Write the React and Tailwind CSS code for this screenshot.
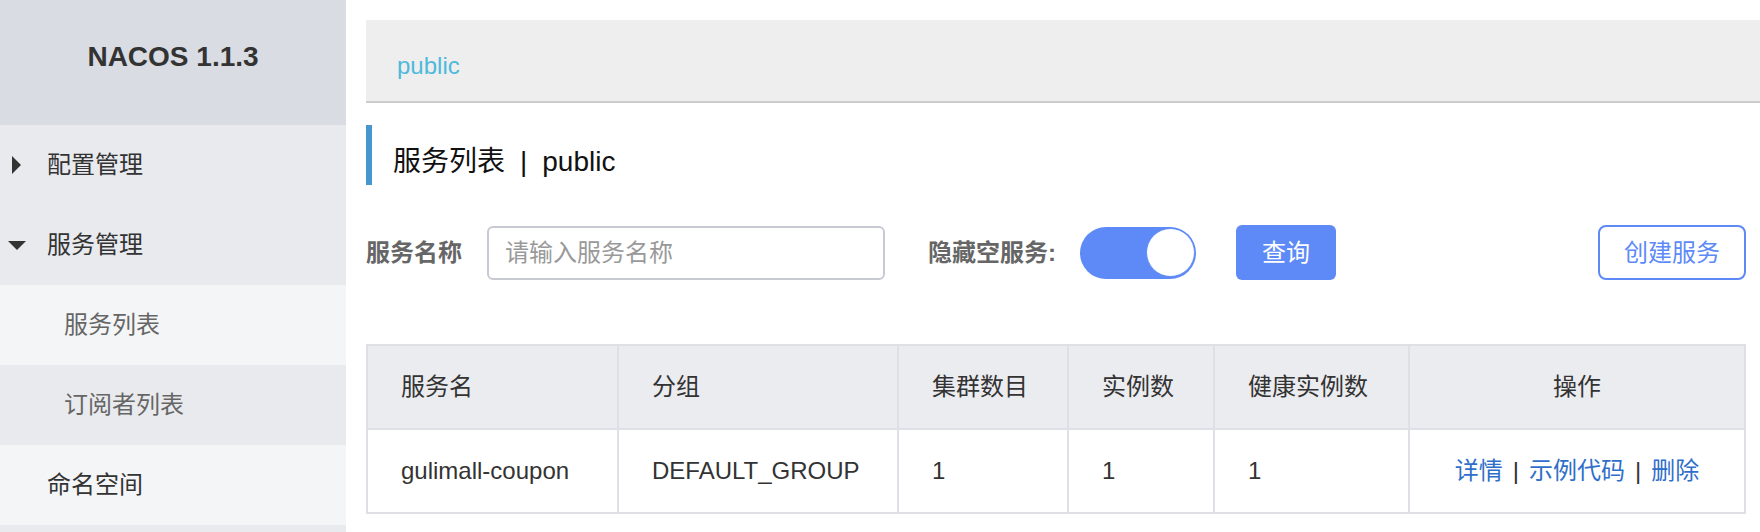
import React from 'react';

const FONT = { fontFamily: '"Liberation Sans", "Noto Sans CJK SC", sans-serif' };

const columns = [
  { title: '服务名', width: 251 },
  { title: '分组', width: 280 },
  { title: '集群数目', width: 170 },
  { title: '实例数', width: 146 },
  { title: '健康实例数', width: 195 },
  { title: '操作', width: 336, center: true },
];

const rows = [
  { name: 'gulimall-coupon', group: 'DEFAULT_GROUP', clusters: 1, instances: 1, healthy: 1 },
];

function Sidebar() {
  return (
    <div className="w-[346px] shrink-0 bg-[#e9eaee] text-[24px]">
      <div className="h-[125px] bg-[#d9dce3] flex items-center justify-center pb-[12px]">
        <span className="text-[28px] font-bold text-[#333]">NACOS 1.1.3</span>
      </div>
      <div className="h-[80px] flex items-center text-[#333]">
        <div className="w-[33px] flex justify-center">
          <span className="w-0 h-0 border-y-[9px] border-y-transparent border-l-[9px] border-l-[#333]" />
        </div>
        <span className="ml-[14px]">配置管理</span>
      </div>
      <div className="h-[80px] flex items-center text-[#333]">
        <div className="w-[33px] flex justify-center">
          <span className="w-0 h-0 border-x-[9px] border-x-transparent border-t-[9px] border-t-[#333]" />
        </div>
        <span className="ml-[14px]">服务管理</span>
      </div>
      <div className="h-[80px] flex items-center pl-[64px] bg-[#f4f5f7] text-[#666]">服务列表</div>
      <div className="h-[80px] flex items-center pl-[64px] text-[#666]">订阅者列表</div>
      <div className="h-[80px] flex items-center pl-[47px] bg-[#f4f5f7] text-[#333]">命名空间</div>
    </div>
  );
}

export default function App() {
  return (
    <div className="min-h-screen flex bg-white" style={FONT}>
      <Sidebar />

      <div className="flex-1 pl-[20px]">
        {/* namespace bar */}
        <div className="mt-[20px] h-[83px] bg-[#eeeeee] border-b-2 border-[#cccccc] pl-[31px] pt-[34px]">
          <span className="text-[24px] leading-[24px] text-[#4fb9dc]">public</span>
        </div>

        <div className="pr-[15px]">
          {/* title */}
          <div className="mt-[22px] h-[60px] border-l-[6px] border-[#4597cd] pl-[21px] flex items-center pt-[14px] text-[28px] text-[#111]">
            <span>服务列表</span>
            <span className="mx-[15px]">|</span>
            <span>public</span>
          </div>

          {/* filters */}
          <div className="mt-[40px] h-[55px] flex items-center text-[24px]">
            <span className="font-bold text-[#666]">服务名称</span>
            <input
              placeholder="请输入服务名称"
              className="ml-[25px] w-[398px] h-[54px] border-2 border-[#c8cad2] rounded-[6px] pl-[16px] text-[24px] placeholder:text-[#999] outline-none"
            />
            <span className="ml-[43px] font-bold text-[#666]">隐藏空服务:</span>
            <div className="ml-[24px] w-[116px] h-[52px] rounded-full bg-[#5d8af6] flex items-center justify-end pr-[1px]">
              <span className="w-[49px] h-[49px] rounded-full bg-white border border-[#5d8af6]" />
            </div>
            <button className="ml-[40px] w-[100px] h-[55px] rounded-[6px] bg-[#5d8af6] text-white text-[24px]">查询</button>
            <button className="ml-auto w-[148px] h-[55px] rounded-[8px] border-2 border-[#5d8af6] bg-white text-[#5d8af6] text-[24px]">创建服务</button>
          </div>

          {/* table */}
          <table className="mt-[64px] w-full table-fixed border-collapse text-[24px] text-[#333]">
            <colgroup>
              {columns.map(c => <col key={c.title} style={{ width: c.width }} />)}
            </colgroup>
            <thead>
              <tr className="h-[84px] bg-[#ebecf0]">
                {columns.map(c => (
                  <th key={c.title} className={`border-2 border-[#dfe0e5] font-normal ${c.center ? 'text-center' : 'text-left pl-[33px]'}`}>
                    {c.title}
                  </th>
                ))}
              </tr>
            </thead>
            <tbody>
              {rows.map(r => (
                <tr key={r.name} className="h-[84px]">
                  <td className="border-2 border-[#dfe0e5] pl-[33px]">{r.name}</td>
                  <td className="border-2 border-[#dfe0e5] pl-[33px]">{r.group}</td>
                  <td className="border-2 border-[#dfe0e5] pl-[33px]">{r.clusters}</td>
                  <td className="border-2 border-[#dfe0e5] pl-[33px]">{r.instances}</td>
                  <td className="border-2 border-[#dfe0e5] pl-[33px]">{r.healthy}</td>
                  <td className="border-2 border-[#dfe0e5] text-center">
                    <a className="text-[#2f6fca]">详情</a>
                    <span className="mx-[10px]">|</span>
                    <a className="text-[#2f6fca]">示例代码</a>
                    <span className="mx-[10px]">|</span>
                    <a className="text-[#2f6fca]">删除</a>
                  </td>
                </tr>
              ))}
            </tbody>
          </table>
        </div>
      </div>
    </div>
  );
}
